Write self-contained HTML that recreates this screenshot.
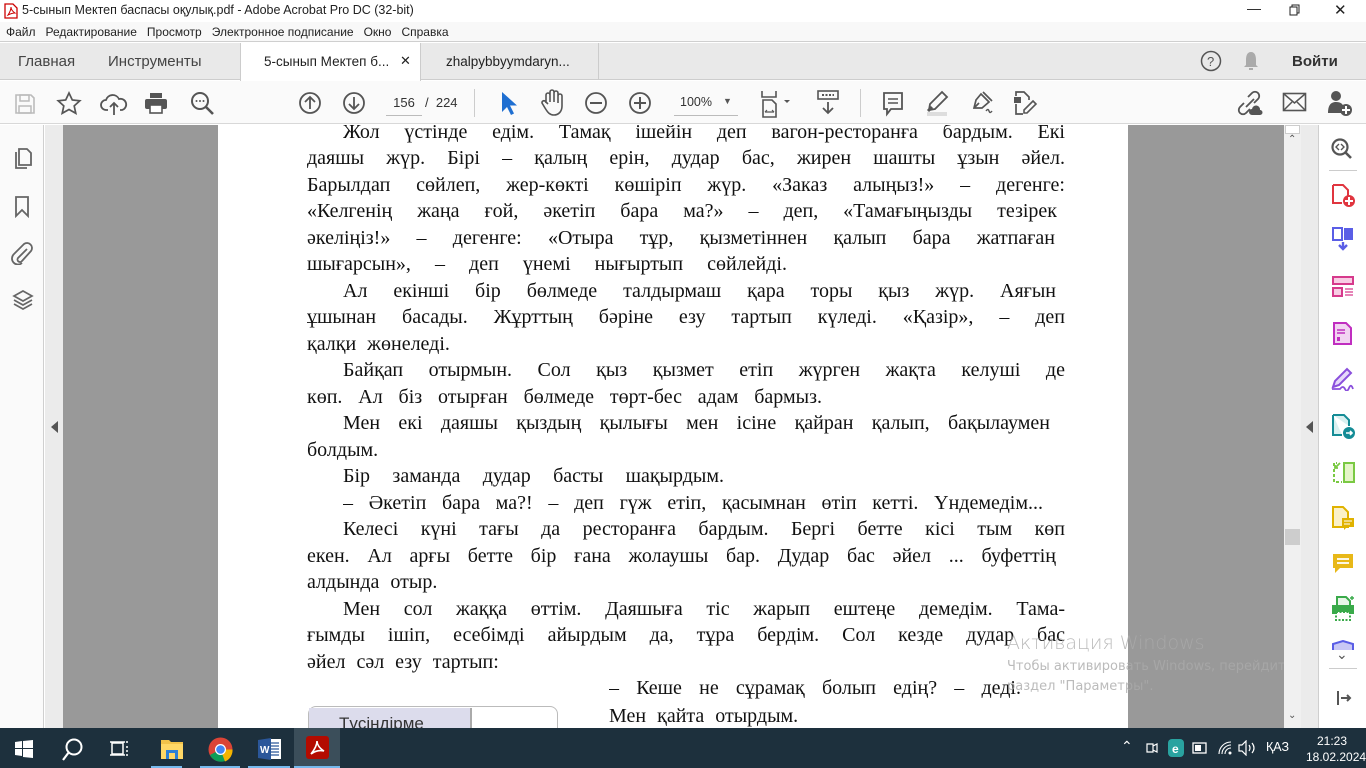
<!DOCTYPE html>
<html><head><meta charset="utf-8"><style>
*{margin:0;padding:0;box-sizing:border-box}
body{width:1366px;height:768px;overflow:hidden;position:relative;background:#fff;font-family:"Liberation Sans",sans-serif;}
.abs{position:absolute}
.ui{font-family:"Liberation Sans","Noto Sans CJK SC",sans-serif;color:#222}
.ln{position:absolute;font-family:"Liberation Serif",serif;font-size:20px;line-height:24px;color:#111;white-space:nowrap;text-align:justify;text-align-last:justify;overflow:hidden}
.nl{text-align:left;text-align-last:left;word-spacing:6px}
svg{position:absolute}
</style></head><body>
<!-- title bar -->
<div class="abs" style="left:0;top:0;width:1366px;height:22px;background:#fff"></div>
<svg style="left:4px;top:3px" width="14" height="16" viewBox="0 0 14 16"><path d="M1 1h8l4 4v10H1z" fill="#fff" stroke="#c00" stroke-width="1.3"/><path d="M4 12c2-3 3-6 3-8 0 2 1 4 4 6-3 0-5 1-7 2z" fill="none" stroke="#c00" stroke-width="1"/></svg>
<div class="abs ui" style="left:22px;top:3px;font-size:12.5px">5-сынып Мектеп баспасы оқулық.pdf - Adobe Acrobat Pro DC (32-bit)</div>
<div class="abs ui" style="left:1247px;top:0;font-size:14px">&#8212;</div>
<svg style="left:1289px;top:4px" width="12" height="12"><rect x="1" y="3" width="7" height="8" fill="none" stroke="#222"/><path d="M3 3V1h7v8H8" fill="none" stroke="#222"/></svg>
<div class="abs ui" style="left:1334px;top:1px;font-size:15px">&#10005;</div>
<!-- menu -->
<div class="abs" style="left:0;top:22px;width:1366px;height:20px;background:#f8f8f8;border-bottom:1px solid #cfcfcf"></div>
<div class="abs ui" style="left:6px;top:25px;font-size:12px;word-spacing:0">Файл&nbsp;&nbsp;&nbsp;Редактирование&nbsp;&nbsp;&nbsp;Просмотр&nbsp;&nbsp;&nbsp;Электронное подписание&nbsp;&nbsp;&nbsp;Окно&nbsp;&nbsp;&nbsp;Справка</div>
<!-- tabs -->
<div class="abs" style="left:0;top:43px;width:1366px;height:37px;background:#e9e9e9;border-bottom:1px solid #cdcdcd"></div>
<div class="abs ui" style="left:18px;top:53px;font-size:15px;color:#444">Главная</div>
<div class="abs ui" style="left:108px;top:53px;font-size:15px;color:#444">Инструменты</div>
<div class="abs" style="left:240px;top:43px;width:181px;height:38px;background:#fff;border-left:1px solid #ccc;border-right:1px solid #ccc"></div>
<div class="abs ui" style="left:264px;top:54px;font-size:13.5px">5-сынып Мектеп б...</div>
<div class="abs ui" style="left:400px;top:53px;font-size:13px">&#10005;</div>
<div class="abs ui" style="left:446px;top:54px;font-size:13.5px">zhalpybbyymdaryn...</div>
<div class="abs" style="left:598px;top:43px;width:1px;height:37px;background:#ccc"></div>
<svg style="left:1200px;top:50px" width="22" height="22"><circle cx="11" cy="11" r="9.5" fill="none" stroke="#555" stroke-width="1.5"/><text x="7" y="16" font-size="13" font-family="Liberation Sans" fill="#555">?</text></svg>
<svg style="left:1242px;top:50px" width="18" height="22"><path d="M9 2c-4 0-5 4-5 8v5l-2 2h14l-2-2v-5c0-4-1-8-5-8z M7 18h4v2H7z" fill="#aaa"/></svg>
<div class="abs ui" style="left:1292px;top:53px;font-size:15px;font-weight:bold;color:#333">Войти</div>
<!-- toolbar -->
<div class="abs" style="left:0;top:81px;width:1366px;height:43px;background:#fafafa;border-bottom:1px solid #d8d8d8"></div>
<svg style="left:14px;top:93px" width="22" height="22"><path d="M2 2h15l3 3v15H2z" fill="none" stroke="#bbb" stroke-width="1.6"/><rect x="6" y="2" width="9" height="6" fill="none" stroke="#bbb" stroke-width="1.5"/><rect x="5" y="13" width="12" height="7" fill="none" stroke="#bbb" stroke-width="1.5"/></svg>
<svg style="left:56px;top:91px" width="26" height="26"><path d="M13 2l3.3 7 7.5.8-5.6 5.1 1.6 7.4L13 18.5 6.2 22.3l1.6-7.4L2.2 9.8l7.5-.8z" fill="none" stroke="#555" stroke-width="1.7"/></svg>
<svg style="left:100px;top:91px" width="28" height="26"><path d="M8 19H6a5 5 0 0 1 0-10 7 7 0 0 1 13-1 5 5 0 0 1 3 11h-2" fill="none" stroke="#555" stroke-width="1.8"/><path d="M14 24V12m-4 4l4-4 4 4" fill="none" stroke="#555" stroke-width="1.8"/></svg>
<svg style="left:144px;top:92px" width="24" height="22"><rect x="6" y="1" width="12" height="5" fill="#555"/><rect x="1" y="7" width="22" height="10" rx="2" fill="#555"/><rect x="6" y="13" width="12" height="8" fill="#fff" stroke="#555" stroke-width="1.6"/></svg>
<svg style="left:190px;top:91px" width="26" height="26"><circle cx="10" cy="10" r="8" fill="none" stroke="#555" stroke-width="2"/><path d="M16 16l7 7" stroke="#555" stroke-width="2.6"/><circle cx="6.5" cy="10" r="1" fill="#555"/><circle cx="10" cy="10" r="1" fill="#555"/><circle cx="13.5" cy="10" r="1" fill="#555"/></svg>
<svg style="left:298px;top:91px" width="24" height="24"><circle cx="12" cy="12" r="10" fill="none" stroke="#555" stroke-width="1.8"/><path d="M12 18V6m-5 5l5-5 5 5" fill="none" stroke="#555" stroke-width="1.8"/></svg>
<svg style="left:342px;top:91px" width="24" height="24"><circle cx="12" cy="12" r="10" fill="none" stroke="#555" stroke-width="1.8"/><path d="M12 6v12m-5-5l5 5 5-5" fill="none" stroke="#555" stroke-width="1.8"/></svg>
<div class="abs ui" style="left:386px;top:95px;width:36px;text-align:center;font-size:13px;color:#333">156</div>
<div class="abs" style="left:386px;top:115px;width:36px;height:1px;background:#bbb"></div>
<div class="abs ui" style="left:425px;top:95px;font-size:13px;color:#333">/&nbsp; 224</div>
<div class="abs" style="left:474px;top:89px;width:1px;height:28px;background:#ccc"></div>
<svg style="left:500px;top:91px" width="18" height="26"><path d="M2 1v20l5-5 4 8 3-1.5-4-8h7z" fill="#1f6fd1"/></svg>
<svg style="left:540px;top:89px" width="26" height="28"><path d="M6 14V6a2 2 0 0 1 4 0v7V3a2 2 0 0 1 4 0v10V4a2 2 0 0 1 4 0v10V7a2 2 0 0 1 4 0v10c0 6-4 9-8 9s-6-2-9-7l-3-5a2 2 0 0 1 3-2l3 3" fill="none" stroke="#555" stroke-width="1.6"/></svg>
<svg style="left:584px;top:91px" width="24" height="24"><circle cx="12" cy="12" r="10" fill="none" stroke="#555" stroke-width="1.8"/><path d="M6 12h12" stroke="#555" stroke-width="2"/></svg>
<svg style="left:628px;top:91px" width="24" height="24"><circle cx="12" cy="12" r="10" fill="none" stroke="#555" stroke-width="1.8"/><path d="M6 12h12M12 6v12" stroke="#555" stroke-width="2"/></svg>
<div class="abs ui" style="left:680px;top:95px;font-size:12.5px;color:#333">100%</div>
<div class="abs ui" style="left:723px;top:96px;font-size:9px;color:#555">&#9660;</div>
<div class="abs" style="left:674px;top:115px;width:64px;height:1px;background:#bbb"></div>
<svg style="left:760px;top:89px" width="36" height="30"><path d="M2 2v6h14V2" fill="none" stroke="#555" stroke-width="1.6"/><path d="M3 11h9l4 4v13H3z" fill="none" stroke="#555" stroke-width="1.6"/><path d="M5 23h9M5 23l2-2M14 23l-2-2" stroke="#555" stroke-width="1.2" fill="none"/><path d="M24 11l3 3 3-3z" fill="#555"/></svg>
<svg style="left:816px;top:89px" width="24" height="28"><rect x="2" y="2" width="20" height="8" fill="none" stroke="#555" stroke-width="1.6"/><path d="M6 6h12" stroke="#555" stroke-dasharray="2 1.5" stroke-width="2"/><path d="M12 13v11m-5-5l5 5 5-5" fill="none" stroke="#555" stroke-width="1.8"/></svg>
<div class="abs" style="left:860px;top:89px;width:1px;height:28px;background:#ccc"></div>
<svg style="left:882px;top:91px" width="22" height="26"><path d="M2 2h18v16H9l-4 5v-5H2z" fill="none" stroke="#555" stroke-width="1.8"/><path d="M6 8h10M6 12h10" stroke="#555" stroke-width="1.6"/></svg>
<svg style="left:924px;top:89px" width="28" height="28"><path d="M18 3l5 5-12 12-6 1 1-6z" fill="none" stroke="#555" stroke-width="1.8"/><rect x="3" y="23" width="20" height="4" fill="#ddd"/><path d="M4 22l4-4" stroke="#555" stroke-width="3"/></svg>
<svg style="left:968px;top:89px" width="28" height="28"><path d="M13 5l8 8-7 6H6l2-8z" fill="none" stroke="#555" stroke-width="1.7"/><path d="M6 19l5-5M15 3l9 9" stroke="#555" stroke-width="1.7"/><path d="M18 22q2-3 3 0t3 0" fill="none" stroke="#555" stroke-width="1.4"/></svg>
<svg style="left:1010px;top:89px" width="28" height="28"><path d="M6 7V3h8l5 5v3M6 15v10h7" fill="none" stroke="#555" stroke-width="1.7"/><rect x="4" y="8" width="7" height="6" fill="#555"/><path d="M23 12l3 3-9 9h-3v-3z" fill="none" stroke="#555" stroke-width="1.6"/></svg>
<svg style="left:1236px;top:89px" width="28" height="28"><path d="M12 8l4-4a4 4 0 0 1 6 6l-4 4M14 20l-4 4a4 4 0 0 1-6-6l4-4M10 18l8-8" fill="none" stroke="#555" stroke-width="1.8"/><path d="M16 26a3 3 0 0 1 0-6 4 4 0 0 1 8 1 2.5 2.5 0 0 1 0 5z" fill="#555"/></svg>
<svg style="left:1282px;top:92px" width="26" height="20"><rect x="1.5" y="1.5" width="22" height="17" fill="none" stroke="#555" stroke-width="1.6"/><path d="M2 2l10.5 9L23 2M2 18l8-8M23 18l-8-8" fill="none" stroke="#555" stroke-width="1.5"/></svg>
<svg style="left:1326px;top:89px" width="28" height="28"><circle cx="10" cy="7" r="5" fill="#555"/><path d="M2 24c0-8 3-11 8-11s7 2 8 6v5z" fill="#555"/><circle cx="20" cy="21" r="6" fill="#555"/><path d="M20 17v8M16 21h8" stroke="#fff" stroke-width="2"/></svg>
<!-- left panel -->
<div class="abs" style="left:0;top:125px;width:44px;height:603px;background:#fafafa;border-right:1px solid #cfcfcf"></div>
<svg style="left:12px;top:147px" width="22" height="24"><path d="M4 5v16h11" fill="none" stroke="#666" stroke-width="1.8"/><path d="M7 2h8l4 4v12H7z" fill="none" stroke="#666" stroke-width="1.8"/></svg>
<svg style="left:14px;top:196px" width="16" height="22"><path d="M2 1h12v19l-6-6-6 6z" fill="none" stroke="#666" stroke-width="1.8"/></svg>
<svg style="left:10px;top:241px" width="24" height="24"><path d="M17 8l-9 9a2.5 2.5 0 0 0 4 3l9-10a5 5 0 0 0-7-7L4 13a6 6 0 0 0 8 9" fill="none" stroke="#666" stroke-width="1.8"/></svg>
<svg style="left:11px;top:289px" width="24" height="24"><path d="M12 2l9 5-9 5-9-5z M3 11l9 5 9-5 M3 15l9 5 9-5" fill="none" stroke="#666" stroke-width="1.7"/></svg>
<div class="abs" style="left:45px;top:125px;width:18px;height:603px;background:#ebebeb"></div>
<svg style="left:51px;top:421px" width="8" height="12"><path d="M7 0v12L0 6z" fill="#555"/></svg>
<!-- gray area -->
<div class="abs" style="left:63px;top:125px;width:155px;height:603px;background:#999"></div>
<div class="abs" style="left:1128px;top:125px;width:156px;height:603px;background:#999"></div>
<!-- page -->
<div class="abs" style="left:218px;top:125px;width:910px;height:603px;background:#fff;overflow:hidden">
<div class="ln" style="left:125px;top:-5px;width:722px">Жол үстінде едім. Тамақ ішейін деп вагон-ресторанға бардым. Екі</div>
<div class="ln" style="left:89px;top:21px;width:758px">даяшы жүр. Бірі – қалың ерін, дудар бас, жирен шашты ұзын әйел.</div>
<div class="ln" style="left:89px;top:48px;width:758px">Барылдап сөйлеп, жер-көкті көшіріп жүр. «Заказ алыңыз!» – дегенге:</div>
<div class="ln" style="left:89px;top:74px;width:750px">«Келгенің жаңа ғой, әкетіп бара ма?» – деп, «Тамағыңызды тезірек</div>
<div class="ln" style="left:89px;top:101px;width:748px">әкеліңіз!» – дегенге: «Отыра тұр, қызметіннен қалып бара жатпаған</div>
<div class="ln" style="left:89px;top:127px;width:480px">шығарсын», – деп үнемі нығыртып сөйлейді.</div>
<div class="ln" style="left:125px;top:154px;width:713px">Ал екінші бір бөлмеде талдырмаш қара торы қыз жүр. Аяғын</div>
<div class="ln" style="left:89px;top:180px;width:758px">ұшынан басады. Жұрттың бәріне езу тартып күледі. «Қазір», – деп</div>
<div class="ln nl" style="left:89px;top:207px;width:300px">қалқи жөнеледі.</div>
<div class="ln" style="left:125px;top:233px;width:722px">Байқап отырмын. Сол қыз қызмет етіп жүрген жақта келуші де</div>
<div class="ln" style="left:89px;top:260px;width:515px">көп. Ал біз отырған бөлмеде төрт-бес адам бармыз.</div>
<div class="ln" style="left:125px;top:286px;width:707px">Мен екі даяшы қыздың қылығы мен ісіне қайран қалып, бақылаумен</div>
<div class="ln nl" style="left:89px;top:313px;width:200px">болдым.</div>
<div class="ln" style="left:125px;top:339px;width:381px">Бір заманда дудар басты шақырдым.</div>
<div class="ln" style="left:125px;top:366px;width:700px">– Әкетіп бара ма?! – деп гүж етіп, қасымнан өтіп кетті. Үндемедім...</div>
<div class="ln" style="left:125px;top:392px;width:722px">Келесі күні тағы да ресторанға бардым. Бергі бетте кісі тым көп</div>
<div class="ln" style="left:89px;top:419px;width:749px">екен. Ал арғы бетте бір ғана жолаушы бар. Дудар бас әйел ... буфеттің</div>
<div class="ln nl" style="left:89px;top:445px;width:300px">алдында отыр.</div>
<div class="ln" style="left:125px;top:472px;width:722px">Мен сол жаққа өттім. Даяшыға тіс жарып ештеңе демедім. Тама-</div>
<div class="ln" style="left:89px;top:498px;width:758px">ғымды ішіп, есебімді айырдым да, тұра бердім. Сол кезде дудар бас</div>
<div class="ln nl" style="left:89px;top:525px;width:300px">әйел сәл езу тартып:</div>
<div class="ln" style="left:391px;top:551px;width:412px">– Кеше не сұрамақ болып едің? – деді.</div>
<div class="ln nl" style="left:391px;top:579px;width:300px">Мен қайта отырдым.</div>
<div class="abs" style="left:90px;top:581px;width:250px;height:40px;border:1.5px solid #bbb;border-radius:8px;background:#fff"></div>
<div class="abs" style="left:91px;top:583px;width:163px;height:40px;background:#dcdcec;border-right:2px solid #aaa"></div>
<div class="abs" style="left:121px;top:589px;font-family:'Liberation Sans',sans-serif;font-size:17px;color:#333">Түсіндірме</div>
</div>
<!-- watermark -->
<div class="abs" style="left:1007px;top:632px;font-size:19px;color:rgba(170,170,170,.8);font-family:'DejaVu Sans',sans-serif;font-weight:300">Активация Windows</div>
<div class="abs" style="left:1007px;top:657px;font-size:13px;color:rgba(170,170,170,.8);font-family:'DejaVu Sans',sans-serif;line-height:20px;width:330px;white-space:nowrap">Чтобы активировать Windows, перейдите в<br>раздел "Параметры".</div>
<!-- scrollbar -->
<div class="abs" style="left:1284px;top:125px;width:17px;height:603px;background:#f0f0f0"></div>
<div class="abs" style="left:1285px;top:125px;width:15px;height:9px;background:#fff;border:1px solid #ccc"></div>
<div class="abs ui" style="left:1288px;top:134px;font-size:10px;color:#555">&#8963;</div>
<div class="abs" style="left:1285px;top:529px;width:15px;height:16px;background:#cdcdcd"></div>
<div class="abs ui" style="left:1288px;top:710px;font-size:10px;color:#555">&#8964;</div>
<div class="abs" style="left:1301px;top:125px;width:18px;height:603px;background:#ebebeb;border-right:1px solid #cfcfcf"></div>
<svg style="left:1306px;top:421px" width="8" height="12"><path d="M7 0v12L0 6z" fill="#555"/></svg>
<!-- right panel -->
<div class="abs" style="left:1320px;top:125px;width:46px;height:603px;background:#fff"></div>
<svg style="left:1330px;top:137px" width="26" height="26"><circle cx="10" cy="10" r="7.5" fill="none" stroke="#555" stroke-width="2.2"/><path d="M15 15l6 6" stroke="#555" stroke-width="2.6"/><path d="M9 7l-3 3 3 3M11 7l3 3-3 3" fill="none" stroke="#555" stroke-width="1.4"/></svg>
<div class="abs" style="left:1329px;top:170px;width:28px;height:1px;background:#ccc"></div>
<svg style="left:1331px;top:183px" width="26" height="26"><path d="M2 2h10l5 5v6M2 2v18h9" fill="none" stroke="#e0353f" stroke-width="2"/><circle cx="18" cy="18" r="6" fill="#e0353f"/><path d="M18 14v8M14 18h8" stroke="#fff" stroke-width="2"/></svg>
<svg style="left:1331px;top:225px" width="26" height="28"><path d="M2 3h9v12H2z" fill="none" stroke="#5a5ee6" stroke-width="2"/><path d="M13 3h9v12h-9z" fill="#5a5ee6"/><path d="M12 17v7m-4-4l4 4 4-4" stroke="#5a5ee6" stroke-width="2.4" fill="none"/></svg>
<svg style="left:1331px;top:275px" width="24" height="24"><rect x="2" y="2" width="20" height="7" fill="#f8cde4" stroke="#d63a8c" stroke-width="2"/><rect x="2" y="13" width="9" height="8" fill="#f8cde4" stroke="#d63a8c" stroke-width="2"/><path d="M14 14h8M14 17h8M14 20h8" stroke="#d63a8c" stroke-width="1.2"/></svg>
<svg style="left:1332px;top:321px" width="22" height="26"><path d="M2 2h12l5 5v16H2z" fill="#f2d4f2" stroke="#c02ec0" stroke-width="2"/><path d="M5 9h8M5 12h8" stroke="#c02ec0" stroke-width="1.4"/><rect x="5" y="16" width="3" height="4" fill="#c02ec0"/></svg>
<svg style="left:1330px;top:367px" width="28" height="24"><path d="M3 20l2-6L17 2l4 4L9 18z" fill="#e6d8fa" stroke="#8a4fdc" stroke-width="2"/><path d="M2 22h8q3-4 5 0t4-1 4 1" fill="none" stroke="#8a4fdc" stroke-width="1.8"/></svg>
<svg style="left:1331px;top:413px" width="26" height="28"><path d="M2 2h11l5 5v6M2 2v20h9" fill="#d9f0f0" stroke="#158c96" stroke-width="2"/><circle cx="18" cy="20" r="6" fill="#158c96"/><path d="M15 20h6m-2-2l2 2-2 2" stroke="#fff" stroke-width="1.6" fill="none"/></svg>
<svg style="left:1331px;top:460px" width="26" height="26"><rect x="13" y="3" width="10" height="19" fill="#e5f5c8" stroke="#7ac943" stroke-width="2"/><path d="M3 9v13h8M3 6V3h3" fill="none" stroke="#7ac943" stroke-width="2" stroke-dasharray="3 2"/><path d="M9 3L4 8M4 5v3h3" stroke="#7ac943" stroke-width="1.8" fill="none"/></svg>
<svg style="left:1331px;top:505px" width="26" height="28"><path d="M2 2h10l5 5v15H2z" fill="#fbf1c8" stroke="#e0b200" stroke-width="2"/><rect x="11" y="13" width="12" height="9" fill="#e0b200"/><path d="M13 22v3l3-3" fill="#e0b200"/><path d="M13 16h8M13 19h6" stroke="#fff" stroke-width="1"/></svg>
<svg style="left:1331px;top:552px" width="24" height="24"><path d="M2 2h20v14H9l-5 5v-5H2z" fill="#e8b818"/><path d="M6 7h12M6 11h12" stroke="#fff" stroke-width="1.8"/></svg>
<svg style="left:1330px;top:595px" width="26" height="28"><path d="M7 10V2h9l4 4v4" fill="#e8f6e8" stroke="#3aaa4a" stroke-width="2"/><rect x="2" y="10" width="22" height="9" fill="#3aaa4a"/><rect x="6" y="17" width="14" height="8" fill="#fff" stroke="#3aaa4a" stroke-width="2" stroke-dasharray="2 1.5"/><path d="M22 1v4M20 3h4" stroke="#3aaa4a" stroke-width="1.4"/></svg>
<svg style="left:1331px;top:640px" width="24" height="10"><path d="M2 10V4l10-3 10 3v6" fill="#c8c8f5" stroke="#5a5ee6" stroke-width="2"/></svg>
<div class="abs ui" style="left:1336px;top:646px;font-size:14px;color:#555">&#8964;</div>
<div class="abs" style="left:1329px;top:668px;width:28px;height:1px;background:#ccc"></div>
<svg style="left:1336px;top:690px" width="16" height="16"><path d="M2 1v14M5 8h9m-3-3l3 3-3 3" stroke="#555" stroke-width="2" fill="none"/></svg>
<!-- taskbar -->
<div class="abs" style="left:0;top:728px;width:1366px;height:40px;background:#1d303d"></div>
<svg style="left:15px;top:740px" width="18" height="18"><path d="M0 2l7-1v7H0zM8 1l10-1v8H8zM0 9h7v7l-7-1zM8 9h10v9l-10-1z" fill="#fff"/></svg>
<svg style="left:60px;top:737px" width="26" height="26"><circle cx="14" cy="10" r="7.5" fill="none" stroke="#fff" stroke-width="2"/><path d="M9 15l-6 8" stroke="#fff" stroke-width="2.2"/></svg>
<svg style="left:110px;top:739px" width="20" height="20"><rect x="2" y="4" width="11" height="11" fill="none" stroke="#fff" stroke-width="1.5"/><path d="M0 3h15M0 16h15M16 3h2M16 8h2M16 12h2M16 16h2" stroke="#fff" stroke-width="1.5"/></svg>
<svg style="left:160px;top:738px" width="24" height="22"><path d="M1 2h8l2 2h12v17H1z" fill="#f2c24a"/><rect x="1" y="6" width="22" height="15" fill="#ffd766"/><rect x="6" y="12" width="12" height="9" fill="#2d7fd6"/><rect x="9" y="15" width="6" height="6" fill="#ffd766"/></svg>
<svg style="left:208px;top:737px" width="25" height="25"><circle cx="12.5" cy="12.5" r="12" fill="#db4437"/><path d="M12.5 12.5L2 18a12 12 0 0 0 15 6z" fill="#0f9d58"/><path d="M12.5 12.5L17 24.5a12 12 0 0 0 7.5-12z" fill="#f4b400"/><circle cx="12.5" cy="12.5" r="5.5" fill="#fff"/><circle cx="12.5" cy="12.5" r="4.3" fill="#4285f4"/></svg>
<svg style="left:258px;top:737px" width="24" height="24"><rect x="8" y="2" width="15" height="20" fill="#fff"/><path d="M11 6h10M11 9h10M11 12h10M11 15h10M11 18h10" stroke="#2b579a" stroke-width="1.2"/><path d="M0 3l13-2v22L0 21z" fill="#2b579a"/><text x="2" y="16" font-size="10" font-weight="bold" fill="#fff" font-family="Liberation Sans">W</text></svg>
<div class="abs" style="left:294px;top:728px;width:46px;height:40px;background:#3b4e5a"></div>
<svg style="left:306px;top:736px" width="23" height="23"><rect width="23" height="23" rx="3" fill="#b30b00"/><path d="M5 18c4-5 6-10 6-13 0 3 2 7 7 10-4-1-9 0-13 3z" fill="none" stroke="#fff" stroke-width="1.6"/></svg>
<div class="abs" style="left:151px;top:766px;width:31px;height:2px;background:#76b9ed"></div>
<div class="abs" style="left:200px;top:766px;width:40px;height:2px;background:#76b9ed"></div>
<div class="abs" style="left:248px;top:766px;width:42px;height:2px;background:#76b9ed"></div>
<div class="abs" style="left:294px;top:766px;width:46px;height:2px;background:#76b9ed"></div>
<div class="abs ui" style="left:1121px;top:738px;font-size:14px;color:#fff">&#8963;</div>
<svg style="left:1146px;top:740px" width="12" height="16"><path d="M1 4h6v8H1z M7 6l4-2v8l-4-2" fill="none" stroke="#fff" stroke-width="1.2"/></svg>
<svg style="left:1168px;top:739px" width="16" height="18"><rect width="16" height="18" rx="4" fill="#29a3a0"/><text x="4" y="14" font-size="12" font-weight="bold" fill="#fff" font-family="Liberation Sans">e</text></svg>
<svg style="left:1192px;top:742px" width="16" height="12"><rect x="1" y="1" width="13" height="10" fill="none" stroke="#fff" stroke-width="1.3"/><rect x="3" y="3" width="6" height="6" fill="#fff"/></svg>
<svg style="left:1217px;top:740px" width="16" height="16"><path d="M2 14a12 12 0 0 1 12-12M5 14a9 9 0 0 1 9-9M8 14a6 6 0 0 1 6-6" fill="none" stroke="#fff" stroke-width="1.1"/><circle cx="13" cy="13" r="1.5" fill="#fff"/></svg>
<svg style="left:1238px;top:740px" width="18" height="16"><path d="M1 5h3l4-4v14l-4-4H1z" fill="none" stroke="#fff" stroke-width="1.2"/><path d="M11 5q2 3 0 6M14 3q4 5 0 10" fill="none" stroke="#fff" stroke-width="1.2"/></svg>
<div class="abs ui" style="left:1266px;top:740px;font-size:12.5px;color:#fff">ҚАЗ</div>
<div class="abs ui" style="left:1306px;top:733px;font-size:12px;color:#fff;width:52px;text-align:center;line-height:16px">21:23<br>18.02.2024</div>
</body></html>
